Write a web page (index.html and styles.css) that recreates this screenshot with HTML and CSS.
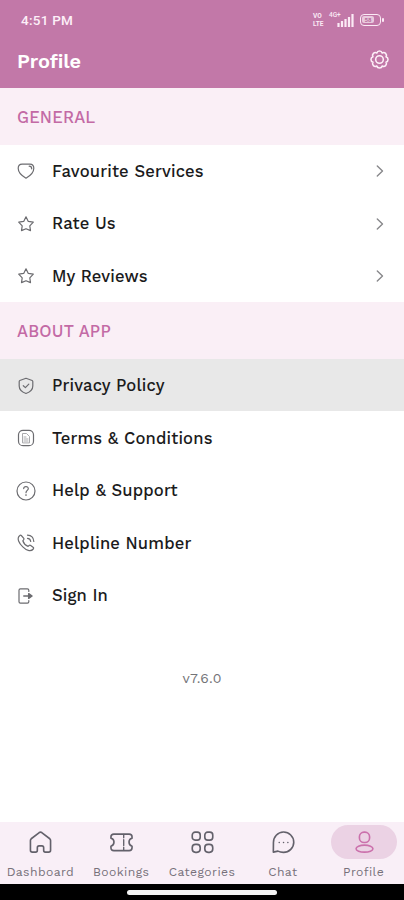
FILE: index.html
```html
<!DOCTYPE html>
<html lang="en">
<head>
<meta charset="utf-8">
<meta name="viewport" content="width=device-width, initial-scale=1">
<title>Profile</title>
<link rel="stylesheet" href="styles.css">
</head>
<body>
<div class="screen">
  <header class="top">
    <div class="status">
      <span class="time">4:51 PM</span>
      <div class="signals">
        <span class="volte"><span>VO</span><span>LTE</span></span>
        <span class="network">4G+</span>
        <svg class="bars" width="17" height="13" viewBox="0 0 17 13"><path d="M1.5 9v4M5 7v6M8.5 5v8M12 3v10M15.5 0v13"/></svg>
        <span class="battery"><span class="charge">58</span></span>
      </div>
    </div>
    <div class="title-row">
      <h1>Profile</h1>
      <svg class="gear" width="21" height="21" viewBox="0 0 22 22"><path d="M8.2 4.2A2.9 2.9 0 0 1 13.8 4.2A2.9 2.9 0 0 1 17.8 8.2A2.9 2.9 0 0 1 17.8 13.8A2.9 2.9 0 0 1 13.8 17.8A2.9 2.9 0 0 1 8.2 17.8A2.9 2.9 0 0 1 4.2 13.8A2.9 2.9 0 0 1 4.2 8.2A2.9 2.9 0 0 1 8.2 4.2Z"/><circle cx="11" cy="11" r="4"/></svg>
    </div>
  </header>

  <main>
    <h2>GENERAL</h2>
    <ul>
      <li><svg class="icon" viewBox="0 0 20 20"><path d="M10 17.2C7.5 15.8 2.2 11.8 2.2 7.3C2.2 4.5 3.8 3.2 6.1 3.2H13.9C16.2 3.2 17.8 4.5 17.8 7.3C17.8 11.8 12.5 15.8 10 17.2Z"/><path d="M13.2 5.2C14.9 5.2 15.7 6.3 15.7 7.8"/></svg><span class="label">Favourite Services</span><svg class="chevron" viewBox="0 0 8 12"><path d="M1.3 1L6.5 6L1.3 11"/></svg></li>
      <li><svg class="icon" viewBox="0 0 20 20"><path d="M10 2.8L12.3 7.4L17.3 8.2L13.8 11.9L14.5 16.6L10 14.7L5.5 16.6L6.2 11.9L2.7 8.2L7.7 7.4Z"/></svg><span class="label">Rate Us</span><svg class="chevron" viewBox="0 0 8 12"><path d="M1.3 1L6.5 6L1.3 11"/></svg></li>
      <li><svg class="icon" viewBox="0 0 20 20"><path d="M10 2.8L12.3 7.4L17.3 8.2L13.8 11.9L14.5 16.6L10 14.7L5.5 16.6L6.2 11.9L2.7 8.2L7.7 7.4Z"/></svg><span class="label">My Reviews</span><svg class="chevron" viewBox="0 0 8 12"><path d="M1.3 1L6.5 6L1.3 11"/></svg></li>
    </ul>
    <h2>ABOUT APP</h2>
    <ul>
      <li class="pressed"><svg class="icon" viewBox="0 0 20 20"><path d="M10 2.3L16.2 4.5Q16.8 4.8 16.8 5.6V10C16.8 13.6 13.6 16.2 10 17.5C6.4 16.2 3.2 13.6 3.2 10V5.6Q3.2 4.8 3.8 4.5Z"/><path d="M7.3 9.7L9.4 11.6L12.8 8.2"/></svg><span class="label">Privacy Policy</span></li>
      <li><svg class="icon" viewBox="0 0 20 20"><rect x="2.5" y="2.3" width="15" height="15.4" rx="4.5"/><path class="faint" d="M6.5 14.5V5.5H10.5L13.5 8.5V14.5ZM8 9H10M8 11H12M8 13H12"/></svg><span class="label">Terms &amp; Conditions</span></li>
      <li><svg class="icon" viewBox="0 0 20 20"><circle cx="10" cy="10" r="9"/><path d="M7.7 7.6C7.8 4.8 12.4 5 12.3 7.7C12.2 9.4 10 9.5 10 11.7M10 13.6V14.4"/></svg><span class="label">Help &amp; Support</span></li>
      <li><svg class="icon" viewBox="0 0 20 20"><path d="M5.3 2.5L7.8 5.4Q8.3 6.1 7.6 6.9L6.8 7.8C7.5 10 9.8 12.5 12.1 13.4L13.1 12.5Q13.9 11.9 14.7 12.5L17.4 14.5Q18 15.1 17.3 16C14.6 19.2 10.2 17.3 6.8 13.9C3.2 10.3 .2 5.4 3.8 2.5Q4.6 1.8 5.3 2.5ZM11.5 2.2C15.2 2.4 17.6 4.9 17.8 8.5M11.5 5.3C13.5 5.5 14.5 6.6 14.7 8.5"/></svg><span class="label">Helpline Number</span></li>
      <li><svg class="icon" viewBox="0 0 20 20"><path d="M12.8 5.5V4.2Q12.8 2.8 11.4 2.8H4.4Q3 2.8 3 4.2V15.8Q3 17.2 4.4 17.2H11.4Q12.8 17.2 12.8 15.8V14.5"/><path class="arrow" d="M7.8 10H16M12.7 7.7L16 10L12.7 12.3Z"/></svg><span class="label">Sign In</span></li>
    </ul>
    <p class="version">v7.6.0</p>
  </main>

  <nav>
    <a class="tab"><span class="holder"><svg viewBox="0 0 24 24"><path d="M3.5 22Q1.5 22 1.5 20V9.8Q1.5 8.8 2.3 8.1L10.7 1.6Q12 .7 13.3 1.6L21.7 8.1Q22.5 8.8 22.5 9.8V20Q22.5 22 20.5 22H17Q15.3 22 15.3 20V17.5Q15.3 15.5 13.5 15.5H10.5Q8.7 15.5 8.7 17.5V20Q8.7 22 7 22Z"/></svg></span><span class="caption">Dashboard</span></a>
    <a class="tab"><span class="holder"><svg viewBox="0 0 24 24"><path d="M4 3.2H20Q23 3.2 23 6V7.5C18.8 8.5 18.8 14.5 23 16V17.5Q23 20.5 20 20.5H4Q1 20.5 1 17.5V16C5.2 14.5 5.2 8.5 1 7.5V6Q1 3.2 4 3.2Z"/><path class="ticket-line" d="M14.3 3.5V7M14.3 9V15M14.3 17V20"/></svg></span><span class="caption">Bookings</span></a>
    <a class="tab"><span class="holder"><svg viewBox="0 0 24 24"><rect x="1.3" y="1.2" width="8.3" height="8.3" rx="3"/><rect x="14.4" y="1.2" width="8.3" height="8.3" rx="3"/><rect x="1.3" y="14" width="8.3" height="8.3" rx="3.4"/><rect x="14.4" y="14" width="8.3" height="8.3" rx="3.4"/></svg></span><span class="caption">Categories</span></a>
    <a class="tab"><span class="holder"><svg viewBox="0 0 24 24"><path d="M1.4 22L1.5 12A10.6 10.6 0 1 1 12 22.3Q8.7 22.3 6.2 21Z"/><path class="dots" d="M7.5 12H7.6M12 12H12.1M16.5 12H16.6"/></svg></span><span class="caption">Chat</span></a>
    <a class="tab active"><span class="holder"><svg viewBox="0 0 24 24"><rect x="6.7" y="1.2" width="10.6" height="10.8" rx="4.8"/><ellipse cx="12" cy="18.4" rx="8.8" ry="3.7"/></svg></span><span class="caption">Profile</span></a>
  </nav>
  <footer><span class="home-bar"></span></footer>
</div>
</body>
</html>
```
FILE: styles.css
```css
* { box-sizing: border-box; margin: 0; padding: 0; }
body { font-family: "Work Sans", Inter, "Liberation Sans", sans-serif; background: #fff; color: #1b1b1c; }
svg { fill: none; stroke-linecap: round; stroke-linejoin: round; flex: none; }
.screen { height: 900px; display: flex; flex-direction: column; overflow: hidden; }

.top { height: 88px; background: #c278a8; color: #fff; }
.status { height: 40px; padding: 0 21px; display: flex; align-items: center; justify-content: space-between; }
.time { font: 500 13.5px Roboto, sans-serif; letter-spacing: .25px; color: #fdeff8; }
.signals { display: flex; align-items: center; color: #fbeaf5; }
.volte { display: flex; flex-direction: column; font: 700 6.5px/8px Roboto, sans-serif; width: 14px; }
.network { font: 500 6.5px/7px Roboto, sans-serif; align-self: flex-start; margin: 0 0 0 2px; width: 8px; white-space: nowrap; }
.bars { stroke: #fbeaf5; stroke-width: 2.2; stroke-linecap: butt; }
.battery { position: relative; width: 21px; height: 12px; border: 1.5px solid #fbeaf5; border-radius: 4px; margin: 0 2px 0 6px; padding: 1px; display: flex; }
.battery::after { content: ""; position: absolute; right: -4px; top: 2.5px; width: 2px; height: 4px; border-radius: 1px; background: #fbeaf5; }
.charge { width: 12px; height: 7px; border-radius: 2px; background: #e9c9dd; color: #b66a9b; font: 700 6px/7px Roboto, sans-serif; text-align: center; }
.title-row { height: 41px; padding: 0 14px 0 17px; display: flex; align-items: center; justify-content: space-between; }
h1 { font-size: 20px; font-weight: 600; letter-spacing: -.1px; }
.gear { stroke: #fdeff8; stroke-width: 1.6; margin-top: -2px; }

main { height: 734px; }
h2 { height: 56.5px; padding: 1px 0 0 17px; background: #faeff6; color: #c36aa5; font-size: 16.5px; font-weight: 500; line-height: 57px; letter-spacing: .2px; }
ul { list-style: none; }
li { height: 52.6px; display: flex; align-items: center; padding: 1px 20px 0 16px; }
.pressed { background: #e8e8e8; }
.icon { width: 20px; height: 20px; stroke: #6c6c70; stroke-width: 1.2; }
.faint { stroke: #a0a0a4; stroke-width: .9; }
.arrow { fill: #6c6c70; stroke-width: 1.5; }
.label { flex: 1; margin-left: 16px; font-size: 16.6px; font-weight: 500; letter-spacing: .15px; white-space: nowrap; }
.chevron { width: 8px; height: 12px; stroke: #88888b; stroke-width: 1.4; }
.version { margin-top: 47px; text-align: center; font-size: 14px; line-height: 18px; color: #747478; letter-spacing: .2px; }

nav { height: 62px; background: #f9eff7; display: grid; grid-template-columns: repeat(5, 1fr); }
.tab { display: flex; flex-direction: column; align-items: center; padding-top: 3px; }
.holder { width: 66px; height: 34px; border-radius: 17px; display: flex; align-items: center; justify-content: center; }
.holder svg { width: 23px; height: 23px; margin: 1px 0 0 1px; stroke: #63616b; stroke-width: 1.7; }
.ticket-line { stroke-width: 1.4; }
.dots { stroke-width: 1.5; }
.caption { margin-top: 5px; font-size: 12.2px; line-height: 16px; letter-spacing: .4px; color: #77717a; white-space: nowrap; }
.active .holder { background: #ebd2e4; }
.active .holder svg { stroke: #cb71ac; }
footer { height: 16px; background: #000; display: flex; justify-content: center; padding-top: 6px; }
.home-bar { width: 150px; height: 5px; border-radius: 3px; background: #f5f5f5; }
```
